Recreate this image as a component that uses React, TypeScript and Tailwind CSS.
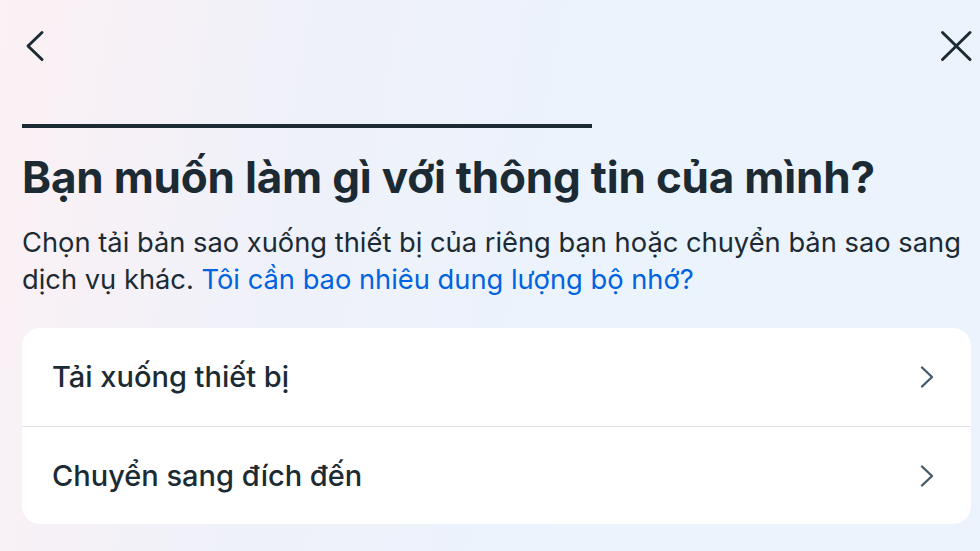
import React from "react";

function BackIcon() {
  return (
    <svg width="24" height="32" viewBox="0 0 24 32" fill="none" aria-hidden>
      <path
        d="M19 2.5 L5 16 L19 29.5"
        stroke="#1c2b33"
        strokeWidth="3"
        strokeLinecap="round"
        strokeLinejoin="round"
      />
    </svg>
  );
}

function CloseIcon() {
  return (
    <svg width="34" height="32" viewBox="0 0 34 32" fill="none" aria-hidden>
      <path
        d="M3.5 2.5 L31 29.5 M31 2.5 L3.5 29.5"
        stroke="#1c2b33"
        strokeWidth="3"
        strokeLinecap="round"
      />
    </svg>
  );
}

function RowChevron() {
  return (
    <svg width="16" height="24" viewBox="0 0 16 24" fill="none" aria-hidden>
      <path
        d="M3 2.5 L13 12 L3 21.5"
        stroke="#465a69"
        strokeWidth="2.4"
        strokeLinecap="round"
        strokeLinejoin="round"
      />
    </svg>
  );
}

const options = ["Tải xuống thiết bị", "Chuyển sang đích đến"];

export default function App() {
  return (
    <div className="w-[980px] h-[551px] overflow-hidden bg-[linear-gradient(100deg,#fcf1f4_0%,#eff1fa_30%,#ebf3fc_60%,#ecf3fc_100%)] text-[#1c2b33] font-['Inter',sans-serif]">
      <div className="pl-[22px] pr-[9px]">
        <div className="flex flex-row justify-between items-center pt-[30px]">
          <button type="button" aria-label="Quay lại" className="ml-[1px]">
            <BackIcon />
          </button>
          <button type="button" aria-label="Đóng" className="-mr-[2px]">
            <CloseIcon />
          </button>
        </div>

        <div className="mt-[62px] w-[570px] h-[4px] bg-[#1c2b33]" />

        <h1 className="mt-[23px] text-[44px] leading-[52px] font-bold tracking-[-0.2px]">
          Bạn muốn làm gì với thông tin của mình?
        </h1>
        <p className="mt-[21px] text-[27.3px] leading-[37px] -mr-[4px]">
          Chọn tải bản sao xuống thiết bị của riêng bạn hoặc chuyển bản sao sang
          dịch vụ khác.{" "}
          <span className="text-[#0064e0]">
            Tôi cần bao nhiêu dung lượng bộ nhớ?
          </span>
        </p>

        <div className="mt-[30px] bg-white rounded-[18px] flex flex-col">
          {options.map((label, i) => (
            <div
              key={label}
              className={
                "h-[98px] flex flex-row items-center justify-between pl-[30px] pr-[36px]" +
                (i > 0 ? " border-t border-[#dce2ea]" : "")
              }
            >
              <span className="text-[29px] font-medium">{label}</span>
              <RowChevron />
            </div>
          ))}
        </div>
      </div>
    </div>
  );
}
